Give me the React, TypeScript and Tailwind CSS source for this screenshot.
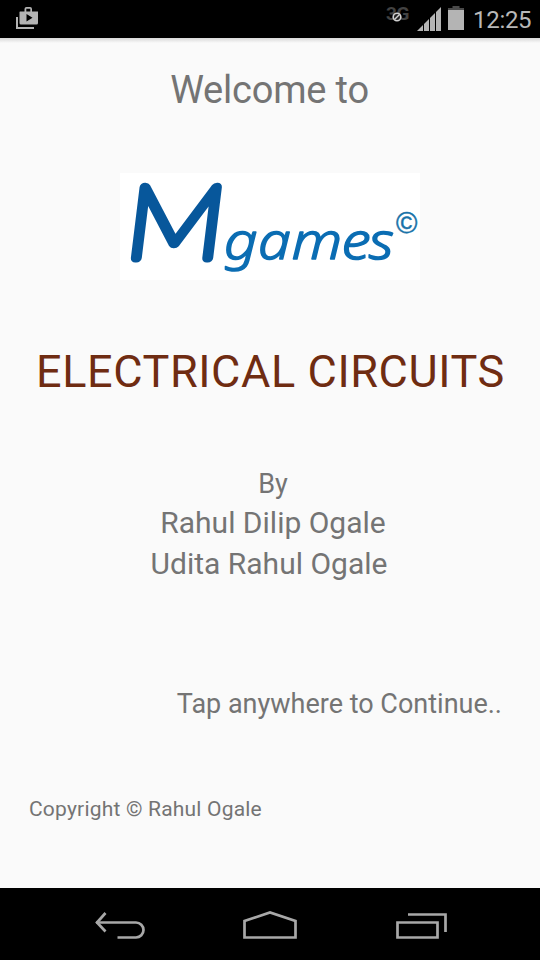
const statusIconColor = '#b4b4b4'

function StoreIcon() {
  return (
    <svg width="24" height="24" viewBox="0 0 24 24" className="mt-[6px]">
      <path d="M2 11v11h17" fill="none" stroke={statusIconColor} strokeWidth="2" />
      <path
        fillRule="evenodd"
        fill={statusIconColor}
        d="M5 5.500h4.500V3q0-2 2-2h3.500q2 0 2 2v2.500h6V17q0 1.500-1.500 1.500H6Q4.500 18.500 4.500 17V6zM11.300 5.500h4V2.800h-4zM11.500 8v7.500l6-3.800z"
      />
    </svg>
  )
}

function NoDataIcon() {
  return (
    <div className="relative mt-[4px] h-5 w-[26px]">
      <span className="block font-['Roboto'] text-[19px] leading-5 font-bold tracking-[-0.3px] text-[#424242]">3G</span>
      <svg width="10" height="10" viewBox="0 0 10 10" className="absolute top-[8px] left-[6px]">
        <circle cx="5" cy="5" r="3.800" fill="#222" stroke="#d0d0d0" strokeWidth="1.600" />
        <path d="M2.500 7.500l5-5" stroke="#d0d0d0" strokeWidth="1.500" />
      </svg>
    </div>
  )
}

function SignalIcon() {
  return (
    <svg width="25" height="25" viewBox="0 0 25 25" className="mt-[7px]">
      <path d="M0 24L24 0V24z" fill={statusIconColor} />
      <path d="M6.500 0v25M12.500 0v25M18.500 0v25" stroke="#000" strokeWidth="1" />
    </svg>
  )
}

function BatteryIcon() {
  return (
    <svg width="16" height="24" viewBox="0 0 16 24" className="mt-[6px]">
      <path d="M4.500 0h7v2H16v3H0V2h4.500z" fill="#4a4a4a" />
      <path d="M0 4h16v20H0z" fill={statusIconColor} />
    </svg>
  )
}

function StatusBar() {
  return (
    <header className="flex h-[38px] shrink-0 items-start bg-black pr-[9px] pl-[15px]">
      <StoreIcon />
      <div className="ml-auto flex">
        <NoDataIcon />
        <div className="ml-[5px]"><SignalIcon /></div>
        <div className="ml-[6px]"><BatteryIcon /></div>
        <span className="ml-[9px] w-[58px] text-[24px] leading-[40px] tracking-[-0.3px] whitespace-nowrap text-[#b8b8b8]">12:25</span>
      </div>
    </header>
  )
}

function Logo() {
  return (
    <svg width="300" height="107" viewBox="0 0 300 107" className="mx-auto mt-[64px] block overflow-visible bg-white">
      <text
        transform="translate(3 85) skewX(-7) scale(1.090 1)"
        fontFamily="Lato"
        fontSize="101"
        fontWeight="100"
        fill="#07579b"
        stroke="#07579b"
        strokeWidth="9"
        strokeLinejoin="round"
      >
        M
      </text>
      <text
        transform="translate(104 86) scale(1.130 1)"
        x="0 30 60 104 128"
        fontFamily="Noto Sans"
        fontStyle="italic"
        fontWeight="300"
        fontSize="52"
        fill="#0b6db3"
        stroke="#0b6db3"
        strokeWidth="1.500"
        strokeLinejoin="round"
      >
        games
      </text>
      <text x="276" y="60" fontFamily="Liberation Sans" fontSize="29" fill="#1872a8" stroke="#1872a8" strokeWidth="0.500">©</text>
    </svg>
  )
}

function NavBar() {
  return (
    <nav className="flex h-[72px] shrink-0 items-center justify-between bg-black px-[94px]">
      <svg width="52" height="32" viewBox="0 0 52 32" fill="none" stroke="#a8a8a8" strokeWidth="2.700">
        <path d="M2 14.500H42a7.500 7.500 0 0 1 0 15H23.500" />
        <path d="M11.500 5L3 14.500L11.500 23.500" />
      </svg>
      <svg width="54" height="32" viewBox="0 0 54 32" fill="none" stroke="#a8a8a8" strokeWidth="2.700">
        <path d="M1.500 29.500V13L27 4.500L52.500 13V29.500z" />
      </svg>
      <svg width="52" height="32" viewBox="0 0 52 32" fill="none" stroke="#a8a8a8" strokeWidth="2.700" className="overflow-visible">
        <path d="M3.500 14.500h40v15h-40zM14 6.500h37.500V24" />
      </svg>
    </nav>
  )
}

export default function App() {
  return (
    <div className="flex h-[960px] w-[540px] flex-col overflow-hidden bg-[#fafafa] font-['Roboto',sans-serif] text-[#747474]">
      <StatusBar />
      <div className="h-[5px] shrink-0 bg-linear-to-b from-[#d8d8d8] to-[#fafafa]" />
      <main className="flex-1 whitespace-nowrap">
        <p className="mt-[28px] pr-px text-center text-[38px] leading-[38px] tracking-[-0.2px]">Welcome to</p>
        <Logo />
        <h1 className="mt-[69px] pl-px text-center text-[45px] leading-[45px] tracking-[0.6px] text-[#6f2c12]">ELECTRICAL CIRCUITS</h1>
        <p className="mt-[77px] pl-[6px] text-center text-[27px] leading-[27px]">By</p>
        <p className="mt-[10px] pl-[6px] text-center text-[30px] leading-[30px]">Rahul Dilip Ogale</p>
        <p className="mt-[11px] pr-[2px] text-center text-[30px] leading-[30px]">Udita Rahul Ogale</p>
        <p className="mt-[112px] pr-[38px] text-right text-[27px] leading-[27px]">Tap anywhere to Continue..</p>
        <p className="mt-[81px] pl-[29px] text-[21px] leading-[21px] tracking-[0.2px]">Copyright © Rahul Ogale</p>
      </main>
      <NavBar />
    </div>
  )
}
